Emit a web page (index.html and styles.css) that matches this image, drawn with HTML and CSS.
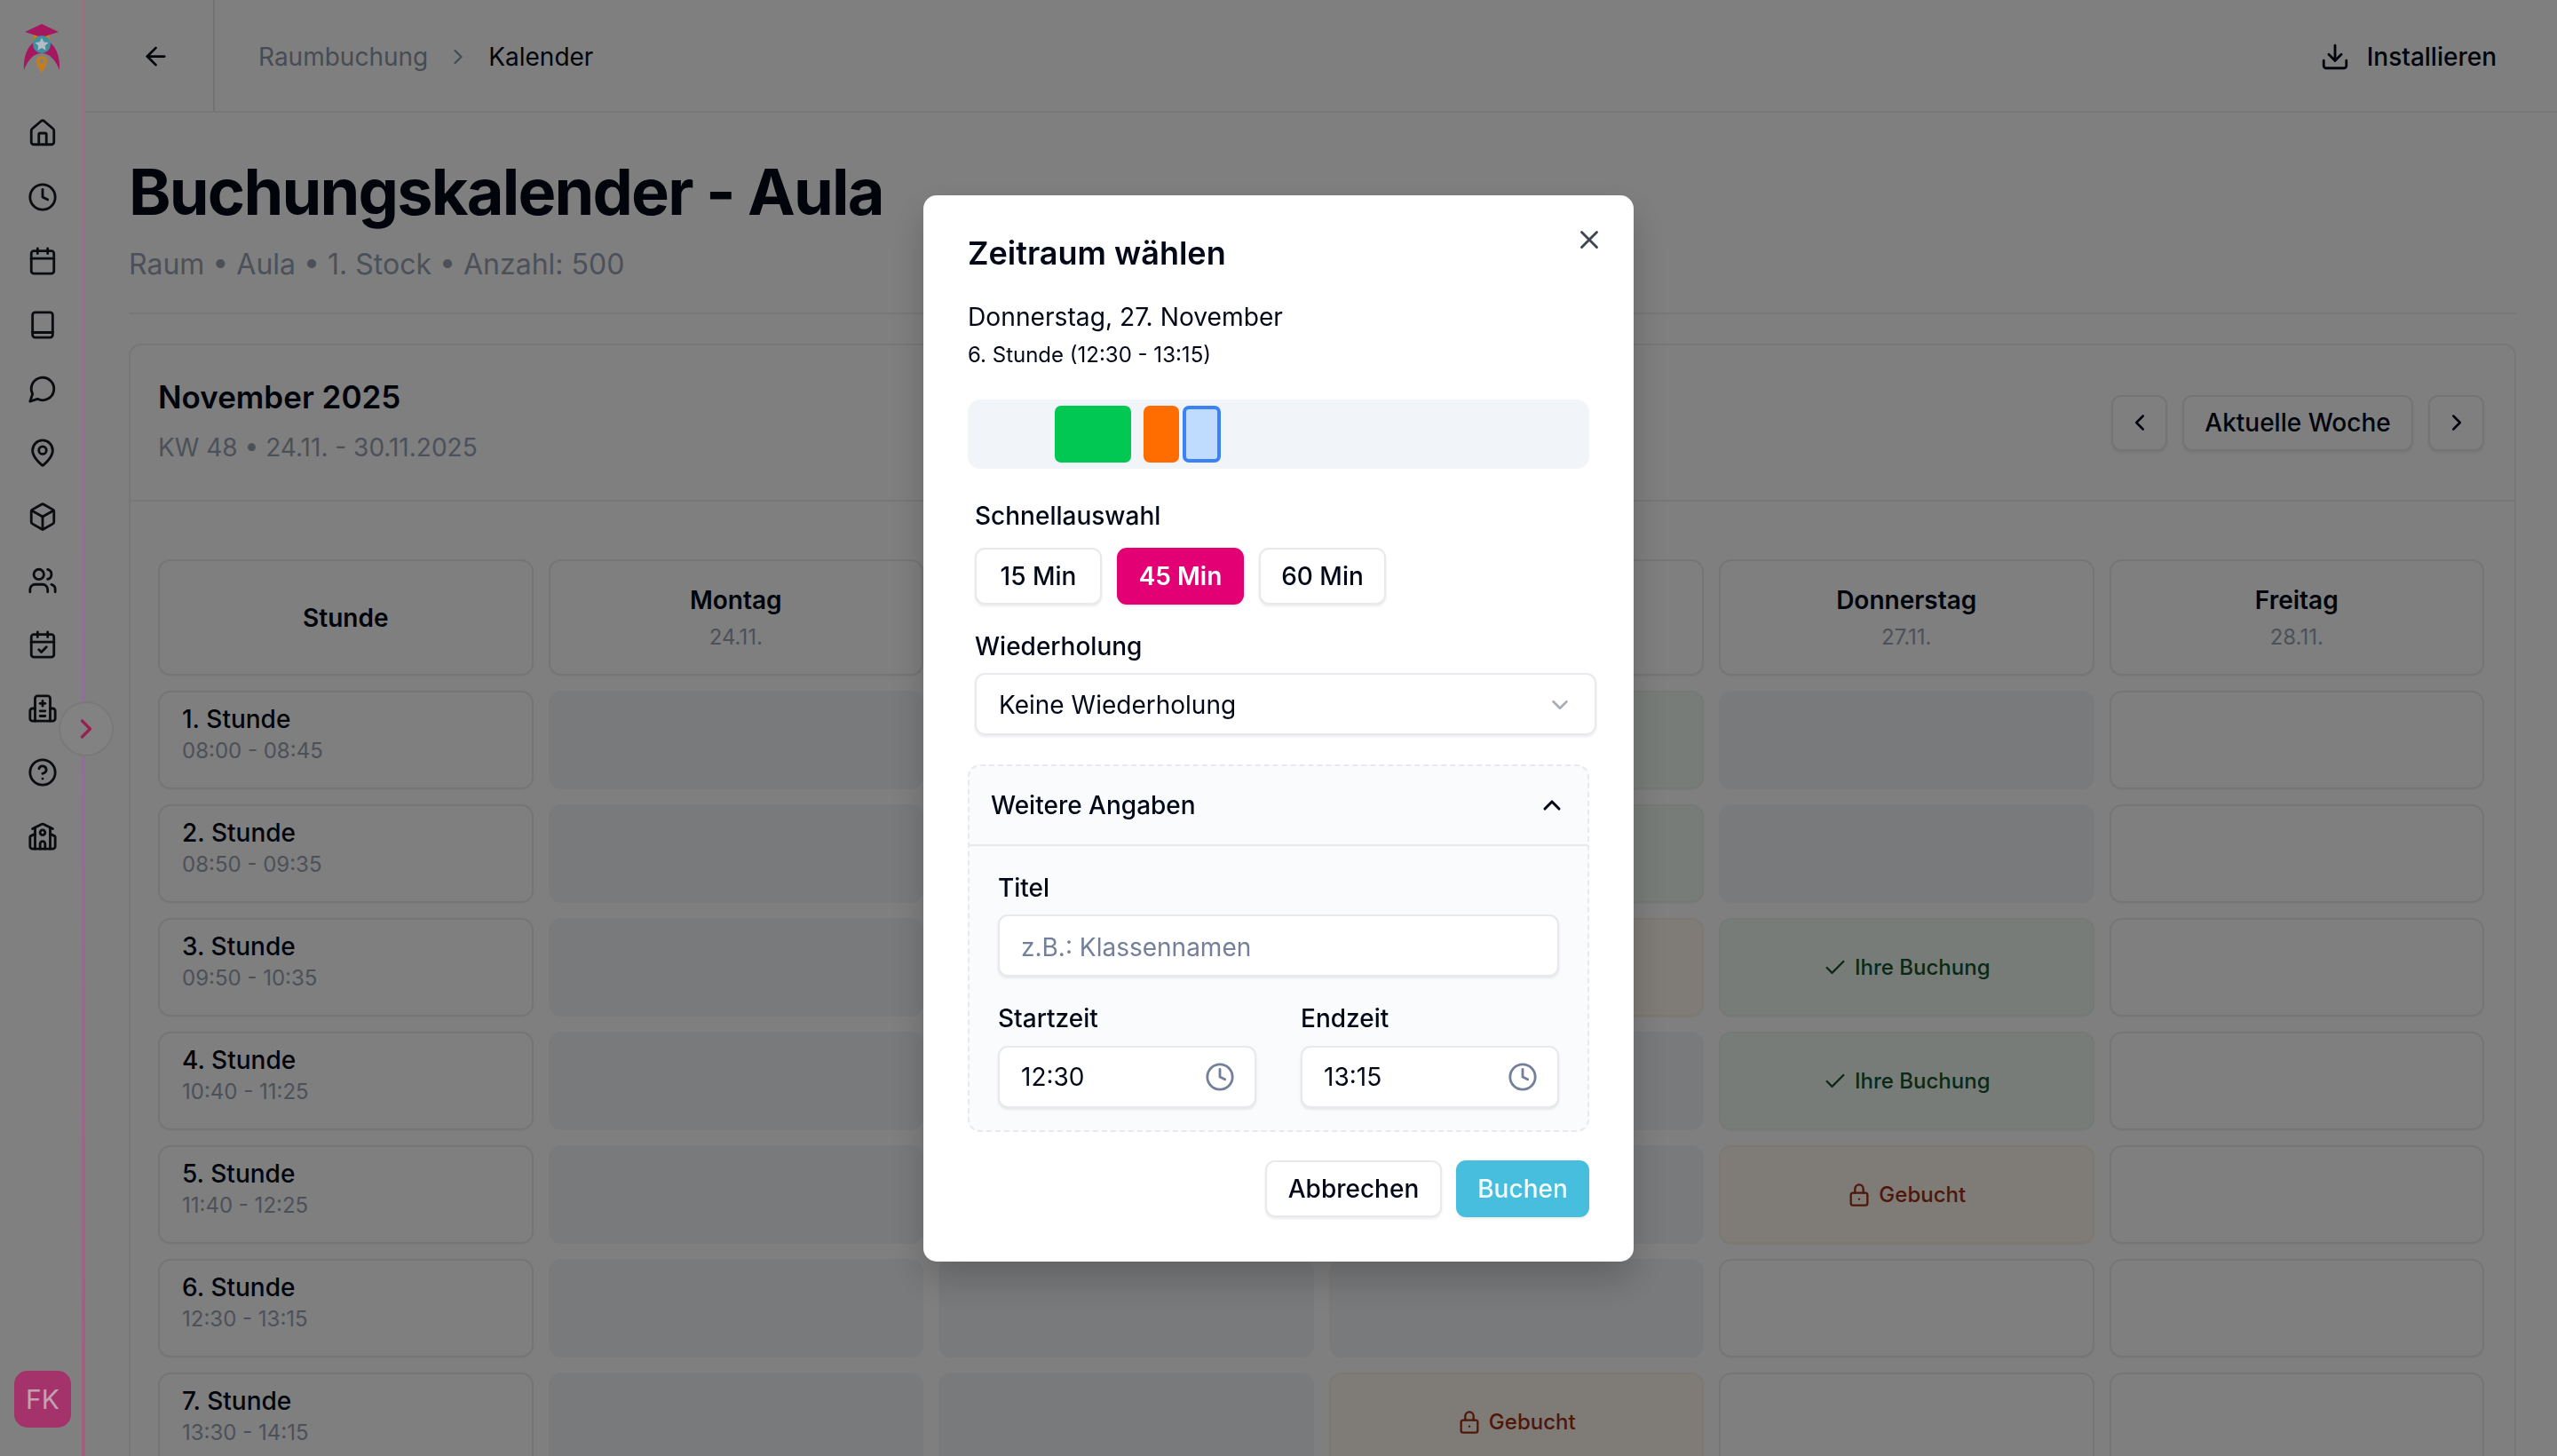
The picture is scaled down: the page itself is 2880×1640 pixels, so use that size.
FILE: index.html
```html
<!DOCTYPE html>
<html lang="de">
<head>
    <meta charset="UTF-8">
    <meta name="viewport" content="width=device-width, initial-scale=1.0">
    <title>Buchungskalender - Aula</title>
    <link rel="stylesheet" href="styles.css">
</head>
<body>
    <aside class="sidebar">
        <div class="logo">
            <svg viewBox="0 0 42 56" width="42" height="56">
                <path d="M13 20C5 25 0 37 1 52C5 41 12 33 21 33C30 33 37 41 41 52C42 37 37 25 29 20Z" fill="#a5175f"/>
                <path d="M12 9h18v9H12z" fill="#c47d1e"/>
                <path d="M21 0L40 9L21 15L2 9Z" fill="#a5175f"/>
                <circle cx="21" cy="23" r="10" fill="#3f8f9f"/>
                <path d="M21 15.500l2.300 4.700 5.200.700-3.800 3.600.900 5.100-4.600-2.500-4.600 2.500.900-5.100-3.800-3.600 5.200-.700z" fill="#b4bcc2"/>
                <path d="M21 55C18 50 15 46 15 42a6 6 0 0 1 12 0C27 46 24 50 21 55Z" fill="#c47d1e"/>
                <circle cx="21" cy="42" r="2.500" fill="#808080"/>
            </svg>
        </div>
        <nav class="side-nav">
            <a href="#"><svg class="icon" viewBox="0 0 24 24"><path d="M15 21v-8a1 1 0 0 0-1-1h-4a1 1 0 0 0-1 1v8"/><path d="M3 10a2 2 0 0 1 .709-1.528l7-5.999a2 2 0 0 1 2.582 0l7 5.999A2 2 0 0 1 21 10v9a2 2 0 0 1-2 2H5a2 2 0 0 1-2-2z"/></svg></a>
            <a href="#"><svg class="icon" viewBox="0 0 24 24"><circle cx="12" cy="12" r="10"/><path d="M12 6v6l4 2"/></svg></a>
            <a href="#"><svg class="icon" viewBox="0 0 24 24"><path d="M8 2v4"/><path d="M16 2v4"/><rect x="3" y="4" width="18" height="18" rx="2"/><path d="M3 10h18"/></svg></a>
            <a href="#"><svg class="icon" viewBox="0 0 24 24"><rect x="4" y="2" width="16" height="20" rx="2"/><path d="M4 18h16"/></svg></a>
            <a href="#"><svg class="icon" viewBox="0 0 24 24"><path d="M7.900 20A9 9 0 1 0 4 16.100L2 22Z"/></svg></a>
            <a href="#"><svg class="icon" viewBox="0 0 24 24"><path d="M20 10c0 4.993-5.539 10.193-7.399 11.799a1 1 0 0 1-1.202 0C9.539 20.193 4 14.993 4 10a8 8 0 0 1 16 0"/><circle cx="12" cy="10" r="3"/></svg></a>
            <a href="#"><svg class="icon" viewBox="0 0 24 24"><path d="M21 8a2 2 0 0 0-1-1.730l-7-4a2 2 0 0 0-2 0l-7 4A2 2 0 0 0 3 8v8a2 2 0 0 0 1 1.730l7 4a2 2 0 0 0 2 0l7-4A2 2 0 0 0 21 16Z"/><path d="m3.300 7 8.700 5 8.700-5"/><path d="M12 22V12"/></svg></a>
            <a href="#"><svg class="icon" viewBox="0 0 24 24"><path d="M16 21v-2a4 4 0 0 0-4-4H6a4 4 0 0 0-4 4v2"/><circle cx="9" cy="7" r="4"/><path d="M22 21v-2a4 4 0 0 0-3-3.870"/><path d="M16 3.130a4 4 0 0 1 0 7.750"/></svg></a>
            <a href="#"><svg class="icon" viewBox="0 0 24 24"><path d="M8 2v4"/><path d="M16 2v4"/><rect x="3" y="4" width="18" height="18" rx="2"/><path d="M3 10h18"/><path d="m9 16 2 2 4-4"/></svg></a>
            <a href="#"><svg class="icon" viewBox="0 0 24 24"><path d="M12 6v4"/><path d="M10 8h4"/><path d="M10 14h4"/><path d="M10 18h4"/><path d="M18 12h2a2 2 0 0 1 2 2v6a2 2 0 0 1-2 2H4a2 2 0 0 1-2-2v-6a2 2 0 0 1 2-2h2"/><path d="M18 22V4a2 2 0 0 0-2-2H8a2 2 0 0 0-2 2v18"/></svg></a>
            <a href="#"><svg class="icon" viewBox="0 0 24 24"><circle cx="12" cy="12" r="10"/><path d="M9.090 9a3 3 0 0 1 5.830 1c0 2-3 3-3 3"/><path d="M12 17h.010"/></svg></a>
            <a href="#"><svg class="icon" viewBox="0 0 24 24"><path d="M14 22v-4a2 2 0 1 0-4 0v4"/><path d="m18 10 3.447 1.724a1 1 0 0 1 .553.894V20a2 2 0 0 1-2 2H4a2 2 0 0 1-2-2v-7.382a1 1 0 0 1 .553-.894L6 10"/><path d="M18 5v17"/><path d="m4 6 7.106-3.553a2 2 0 0 1 1.788 0L20 6"/><path d="M6 5v17"/><circle cx="12" cy="9" r="2"/></svg></a>
        </nav>
        <div class="avatar">FK</div>
        <button class="side-toggle"><svg class="icon" viewBox="0 0 24 24"><path d="m9 18 6-6-6-6"/></svg></button>
    </aside>

    <div class="main">
        <header class="topbar">
            <a class="back-link" href="#"><svg class="icon" viewBox="0 0 24 24"><path d="m12 19-7-7 7-7"/><path d="M19 12H5"/></svg></a>
            <div class="breadcrumb">
                <span class="crumb-muted">Raumbuchung</span>
                <svg class="icon crumb-sep" viewBox="0 0 24 24"><path d="m9 18 6-6-6-6"/></svg>
                <span>Kalender</span>
            </div>
            <a class="install-link" href="#">
                <svg class="icon" viewBox="0 0 24 24"><path d="M12 15V3"/><path d="M21 15v4a2 2 0 0 1-2 2H5a2 2 0 0 1-2-2v-4"/><path d="m7 10 5 5 5-5"/></svg>
                <span>Installieren</span>
            </a>
        </header>

        <main class="content">
            <div class="page-head">
                <h1>Buchungskalender - Aula</h1>
                <p>Raum • Aula • 1. Stock • Anzahl: 500</p>
            </div>

            <section class="calendar-card">
                <div class="card-head">
                    <div>
                        <h2>November 2025</h2>
                        <p>KW 48 • 24.11. - 30.11.2025</p>
                    </div>
                    <div class="week-nav">
                        <button class="btn btn-square"><svg class="icon" viewBox="0 0 24 24"><path d="m15 18-6-6 6-6"/></svg></button>
                        <button class="btn btn-week">Aktuelle Woche</button>
                        <button class="btn btn-square"><svg class="icon" viewBox="0 0 24 24"><path d="m9 18 6-6-6-6"/></svg></button>
                    </div>
                </div>

                <div class="week-grid">
                    <div class="cell head-cell"><strong>Stunde</strong></div>
                    <div class="cell head-cell"><strong>Montag</strong><span>24.11.</span></div>
                    <!-- these two headers stay covered by the dialog -->
                    <div class="cell head-cell" aria-label="Dienstag 25.11."></div>
                    <div class="cell head-cell" aria-label="Mittwoch 26.11."></div>
                    <div class="cell head-cell"><strong>Donnerstag</strong><span>27.11.</span></div>
                    <div class="cell head-cell"><strong>Freitag</strong><span>28.11.</span></div>

                    <div class="cell hour-cell"><strong>1. Stunde</strong><span>08:00 - 08:45</span></div>
                    <div class="cell past"></div>
                    <div class="cell past"></div>
                    <div class="cell own"></div>
                    <div class="cell past"></div>
                    <div class="cell"></div>

                    <div class="cell hour-cell"><strong>2. Stunde</strong><span>08:50 - 09:35</span></div>
                    <div class="cell past"></div>
                    <div class="cell past"></div>
                    <div class="cell own"></div>
                    <div class="cell past"></div>
                    <div class="cell"></div>

                    <div class="cell hour-cell"><strong>3. Stunde</strong><span>09:50 - 10:35</span></div>
                    <div class="cell past"></div>
                    <div class="cell past"></div>
                    <div class="cell taken"></div>
                    <div class="cell own"><svg class="icon" viewBox="0 0 24 24"><path d="M20 6 9 17l-5-5"/></svg>Ihre Buchung</div>
                    <div class="cell"></div>

                    <div class="cell hour-cell"><strong>4. Stunde</strong><span>10:40 - 11:25</span></div>
                    <div class="cell past"></div>
                    <div class="cell past"></div>
                    <div class="cell past"></div>
                    <div class="cell own"><svg class="icon" viewBox="0 0 24 24"><path d="M20 6 9 17l-5-5"/></svg>Ihre Buchung</div>
                    <div class="cell"></div>

                    <div class="cell hour-cell"><strong>5. Stunde</strong><span>11:40 - 12:25</span></div>
                    <div class="cell past"></div>
                    <div class="cell past"></div>
                    <div class="cell past"></div>
                    <div class="cell taken"><svg class="icon" viewBox="0 0 24 24"><rect x="4" y="10" width="16" height="12" rx="2"/><path d="M8 10V6a4 4 0 0 1 8 0v4"/><path d="M12 16h.010"/></svg>Gebucht</div>
                    <div class="cell"></div>

                    <div class="cell hour-cell"><strong>6. Stunde</strong><span>12:30 - 13:15</span></div>
                    <div class="cell past"></div>
                    <div class="cell past"></div>
                    <div class="cell past"></div>
                    <div class="cell"></div>
                    <div class="cell"></div>

                    <div class="cell hour-cell"><strong>7. Stunde</strong><span>13:30 - 14:15</span></div>
                    <div class="cell past"></div>
                    <div class="cell past"></div>
                    <div class="cell taken"><svg class="icon" viewBox="0 0 24 24"><rect x="4" y="10" width="16" height="12" rx="2"/><path d="M8 10V6a4 4 0 0 1 8 0v4"/><path d="M12 16h.010"/></svg>Gebucht</div>
                    <div class="cell"></div>
                    <div class="cell"></div>
                </div>
            </section>
        </main>
    </div>

    <div class="overlay">
        <div class="modal">
            <button class="modal-close"><svg class="icon" viewBox="0 0 24 24"><path d="M18 6 6 18"/><path d="m6 6 12 12"/></svg></button>
            <h3>Zeitraum wählen</h3>
            <p class="modal-date">Donnerstag, 27. November</p>
            <p class="modal-slot">6. Stunde (12:30 - 13:15)</p>

            <div class="timeline">
                <span class="tl-block tl-green" style="left: 98px; width: 86px"></span>
                <span class="tl-block tl-orange" style="left: 198px; width: 40px"></span>
                <span class="tl-block tl-selected" style="left: 242px; width: 43px"></span>
            </div>

            <div class="field-group">
                <label class="field-label">Schnellauswahl</label>
                <div class="quick-row">
                    <button class="btn btn-quick">15 Min</button>
                    <button class="btn btn-quick is-active">45 Min</button>
                    <button class="btn btn-quick">60 Min</button>
                </div>
                <label class="field-label repeat-label">Wiederholung</label>
                <div class="select-box">
                    <span>Keine Wiederholung</span>
                    <svg class="icon" viewBox="0 0 24 24"><path d="m6 9 6 6 6-6"/></svg>
                </div>
            </div>

            <div class="more-panel">
                <div class="more-head">
                    <span>Weitere Angaben</span>
                    <svg class="icon" viewBox="0 0 24 24"><path d="m18 15-6-6-6 6"/></svg>
                </div>
                <div class="more-body">
                    <label class="field-label">Titel</label>
                    <input class="text-input" type="text" placeholder="z.B.: Klassennamen">
                    <div class="time-row">
                        <div class="time-field">
                            <label class="field-label">Startzeit</label>
                            <div class="time-box">
                                <span>12:30</span>
                                <svg class="icon" viewBox="0 0 24 24"><circle cx="12" cy="12" r="10"/><path d="M12 6v6l4 2"/></svg>
                            </div>
                        </div>
                        <div class="time-field">
                            <label class="field-label">Endzeit</label>
                            <div class="time-box">
                                <span>13:15</span>
                                <svg class="icon" viewBox="0 0 24 24"><circle cx="12" cy="12" r="10"/><path d="M12 6v6l4 2"/></svg>
                            </div>
                        </div>
                    </div>
                </div>
            </div>

            <div class="modal-actions">
                <button class="btn btn-cancel">Abbrechen</button>
                <button class="btn btn-book">Buchen</button>
            </div>
        </div>
    </div>
</body>
</html>
```

FILE: styles.css
```css
/* Global Styles */
* {
    margin: 0;
    padding: 0;
    box-sizing: border-box;
}

html, body {
    height: 100%;
    overflow: hidden;
}

body {
    font-family: 'Inter', 'Noto Sans', sans-serif;
    background-color: #fff;
    color: #020817;
    display: flex;
    font-size: 28px;
}

button {
    font-family: inherit;
    background: none;
    border: none;
}

.icon {
    fill: none;
    stroke: currentColor;
    stroke-width: 2;
    stroke-linecap: round;
    stroke-linejoin: round;
    display: block;
}

/* Sidebar (sits above the dim layer, colours are already dimmed) */
.sidebar {
    position: relative;
    z-index: 60;
    width: 96px;
    flex-shrink: 0;
    height: 100%;
    background-color: #808080;
    display: flex;
    flex-direction: column;
    border-right: 4px solid;
    border-image: linear-gradient(180deg, #96737f 0%, #8f7098 50%, #a55e7c 100%) 1;
}

.logo {
    height: 122px;
    padding: 27px 0 0 26px;
}

.side-nav {
    display: flex;
    flex-direction: column;
    gap: 38px;
    padding-left: 31px;
    padding-top: 11px;
    color: #0a0c10;
}

.side-nav a {
    color: inherit;
    display: block;
    height: 34px;
}

.side-nav .icon {
    width: 34px;
    height: 34px;
}

.avatar {
    margin: auto 0 32px 16px;
    width: 64px;
    height: 64px;
    border-radius: 15px;
    background-color: #a3336a;
    color: #c3a0b4;
    font-size: 30px;
    display: flex;
    align-items: center;
    justify-content: center;
}

.side-toggle {
    position: absolute;
    left: 66px;
    top: 790px;
    width: 62px;
    height: 62px;
    border-radius: 50%;
    background-color: #828282;
    border: 2px solid #797979;
    color: #982050;
    display: flex;
    align-items: center;
    justify-content: center;
}

.side-toggle .icon {
    width: 36px;
    height: 36px;
    stroke-width: 2.200;
}

/* Main Content Area */
.main {
    flex-grow: 1;
    min-width: 0;
}

.topbar {
    height: 127px;
    border-bottom: 2px solid #eceef1;
    display: flex;
    align-items: center;
}

.back-link {
    color: #020817;
    width: 146px;
    height: 100%;
    border-right: 2px solid #e5e7eb;
    display: flex;
    align-items: center;
    padding: 2px 0 0 63px;
}

.back-link .icon {
    width: 33px;
    height: 33px;
}

.breadcrumb {
    display: flex;
    align-items: center;
    gap: 20px;
    margin-left: 49px;
    padding-top: 2px;
    flex-grow: 1;
}

.crumb-muted {
    color: #8e98a8;
}

.crumb-sep {
    width: 28px;
    height: 28px;
    color: #8e98a8;
}

.install-link {
    display: flex;
    align-items: center;
    gap: 19px;
    padding-top: 2px;
    color: #020817;
    text-decoration: none;
    font-weight: 500;
    margin-right: 68px;
}

.install-link .icon {
    width: 34px;
    height: 34px;
}

.content {
    padding: 0 46px 0 49px;
}

.page-head {
    height: 227px;
    padding-top: 45px;
    border-bottom: 2px solid #eceef1;
}

.page-head h1 {
    font-size: 72px;
    line-height: 88px;
    font-weight: 700;
    letter-spacing: -1.800px;
}

.page-head p {
    font-size: 32px;
    line-height: 44px;
    color: #98a2b3;
    margin-top: 16px;
}

.calendar-card {
    margin-top: 33px;
    border: 2px solid #eceef1;
    border-bottom: none;
    border-radius: 14px 14px 0 0;
    height: 1300px;
}

.card-head {
    height: 176px;
    border-bottom: 2px solid #eceef1;
    padding: 0 34px 4px 31px;
    display: flex;
    justify-content: space-between;
    align-items: center;
}

.card-head h2 {
    font-size: 35px;
    line-height: 48px;
    font-weight: 600;
}

.card-head p {
    font-size: 28px;
    line-height: 42px;
    color: #98a2b3;
    margin-top: 12px;
}

.week-nav {
    display: flex;
    gap: 17px;
    margin-top: 4px;
}

.btn {
    font-size: 28px;
    font-weight: 500;
    height: 63px;
    border: 2px solid #e7e9ed;
    border-radius: 11px;
    background-color: #fff;
    color: #020817;
    box-shadow: 0 2px 3px rgba(0, 0, 0, 0.08);
    display: flex;
    align-items: center;
    justify-content: center;
}

.btn-square {
    width: 63px;
}

.btn-square .icon {
    width: 30px;
    height: 30px;
}

.btn-week {
    width: 260px;
}

.week-grid {
    display: grid;
    grid-template-columns: repeat(6, 1fr);
    grid-template-rows: 131px;
    grid-auto-rows: 111px;
    gap: 17px;
    padding: 65px 34px 0 31px;
}

.cell {
    border: 2px solid #e9ebef;
    border-radius: 14px;
    background-color: #fff;
    box-shadow: 0 1px 2px rgba(0, 0, 0, 0.05);
    display: flex;
    align-items: center;
    justify-content: center;
    gap: 8px;
    font-size: 24px;
    font-weight: 500;
}

.cell .icon {
    width: 28px;
    height: 28px;
}

.head-cell {
    flex-direction: column;
    gap: 10px;
}

.head-cell strong {
    font-size: 28px;
    font-weight: 600;
}

.head-cell span {
    color: #98a2b3;
    font-weight: 400;
}

.hour-cell {
    flex-direction: column;
    align-items: flex-start;
    gap: 0;
    padding: 0 0 14px 25px;
}

.hour-cell strong {
    font-size: 28px;
    line-height: 36px;
    font-weight: 500;
}

.hour-cell span {
    font-size: 24px;
    line-height: 32px;
    margin-top: 2px;
    font-weight: 400;
    color: #98a2b3;
}

.past {
    background-color: #f2f5f8;
    border-color: #f2f5f8;
    box-shadow: none;
}

.own {
    background-color: #eff9f3;
    border-color: #e6f4eb;
    color: #14532d;
}

.taken {
    background-color: #fff7ed;
    border-color: #fdf0e0;
    color: #9c2f12;
}

/* Modal */
.overlay {
    position: fixed;
    inset: 0;
    z-index: 50;
    background-color: rgba(0, 0, 0, 0.5);
    display: flex;
    align-items: center;
    justify-content: center;
}

.modal {
    position: relative;
    width: 800px;
    height: 1201px;
    padding: 44px 50px 0 50px;
    background-color: #fff;
    border-radius: 15px;
    box-shadow: 0 20px 40px rgba(0, 0, 0, 0.2);
}

.modal-close {
    position: absolute;
    top: 33px;
    right: 33px;
    color: #3f4650;
}

.modal-close .icon {
    width: 34px;
    height: 34px;
}

.modal h3 {
    font-size: 36px;
    line-height: 42px;
    font-weight: 600;
}

.modal-date {
    font-size: 28.200px;
    line-height: 34px;
    margin-top: 34px;
}

.modal-slot {
    font-size: 24px;
    line-height: 30px;
    margin-top: 11px;
}

.timeline {
    position: relative;
    height: 78px;
    margin-top: 35px;
    background-color: #f1f5f9;
    border-radius: 14px;
}

.tl-block {
    position: absolute;
    top: 7px;
    bottom: 7px;
    border-radius: 7px;
}

.tl-green {
    background-color: #00c853;
}

.tl-orange {
    background-color: #ff6d00;
}

.tl-selected {
    background-color: #bfdbfe;
    border: 4px solid #3b82f6;
}

.field-group {
    margin: 36px -8px 0 8px;
}

.field-label {
    display: block;
    font-size: 28px;
    line-height: 34px;
    font-weight: 500;
}

.quick-row {
    display: flex;
    gap: 17px;
    margin-top: 19px;
}

.btn-quick {
    width: 143px;
    height: 64px;
}

.btn-quick.is-active {
    background-color: #e20074;
    border-color: #e20074;
    color: #fff;
    font-weight: 600;
}

.repeat-label {
    margin-top: 30px;
}

.select-box {
    height: 70px;
    margin-top: 13px;
    padding: 2px 24px 0 25px;
    border: 2px solid #e7e9ed;
    border-radius: 11px;
    box-shadow: 0 2px 3px rgba(0, 0, 0, 0.08);
    display: flex;
    align-items: center;
    justify-content: space-between;
}

.select-box .icon {
    width: 30px;
    height: 30px;
    color: #a6acb5;
}

.more-panel {
    height: 414px;
    margin-top: 33px;
    background-color: #fafbfd;
    border: 2px dashed #e7e9ed;
    border-radius: 14px;
}

.more-head {
    height: 90px;
    padding: 0 24px;
    border-bottom: 2px solid #e7e9ed;
    display: flex;
    align-items: center;
    justify-content: space-between;
    font-weight: 500;
}

.more-head .icon {
    width: 32px;
    height: 32px;
    stroke-width: 2.300;
}

.more-body {
    padding: 30px 32px 0 32px;
}

.text-input {
    display: block;
    width: 100%;
    height: 70px;
    margin-top: 13px;
    padding: 4px 24px 0;
    font-family: inherit;
    font-size: 28px;
    color: #020817;
    background-color: #fff;
    border: 2px solid #e7e9ed;
    border-radius: 11px;
    box-shadow: 0 2px 3px rgba(0, 0, 0, 0.08);
}

.text-input::placeholder {
    color: #74809a;
    opacity: 1;
}

.time-row {
    display: flex;
    gap: 50px;
    margin-top: 30px;
}

.time-field {
    flex: 1;
}

.time-box {
    height: 70px;
    margin-top: 14px;
    padding: 0 22px 0 24px;
    background-color: #fff;
    border: 2px solid #e7e9ed;
    border-radius: 11px;
    box-shadow: 0 2px 3px rgba(0, 0, 0, 0.08);
    display: flex;
    align-items: center;
    justify-content: space-between;
}

.time-box .icon {
    width: 34px;
    height: 34px;
    color: #74809a;
}

.modal-actions {
    display: flex;
    justify-content: flex-end;
    gap: 16px;
    margin-top: 32px;
}

.btn-cancel {
    width: 199px;
    height: 64px;
}

.btn-book {
    width: 150px;
    height: 64px;
    background-color: #47bedd;
    border-color: #47bedd;
    color: #f2fbfd;
}
```
